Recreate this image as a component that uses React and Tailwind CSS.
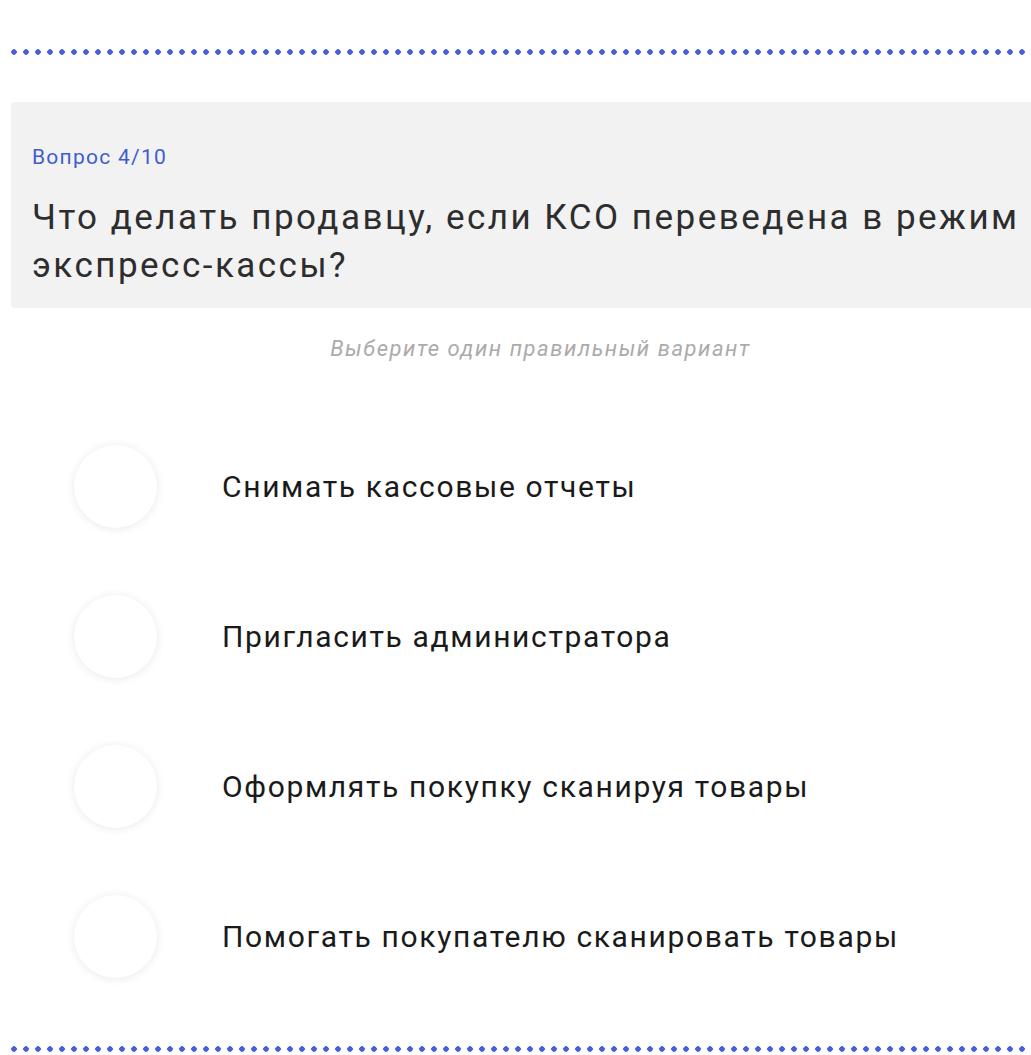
import { useState } from 'react';

const options = [
    'Снимать кассовые отчеты',
    'Пригласить администратора',
    'Оформлять покупку сканируя товары',
    'Помогать покупателю сканировать товары',
];

// Row of blue dots used as a divider above and below the quiz
const DotDivider = ({ className = '' }) => (
    <div
        className={`h-[6px] ml-[8px] bg-[radial-gradient(circle,#4a5fd4_2.5px,transparent_3px)] bg-size-[12px_6px] ${className}`}
    />
);

const Option = ({ label, selected, onSelect }) => (
    <button
        onClick={onSelect}
        className="flex items-center gap-[65px] text-left cursor-pointer"
    >
        <span className="w-[83px] h-[83px] rounded-full bg-white shadow-[0_1px_10px_rgba(0,0,0,0.09)] flex items-center justify-center shrink-0">
            {selected && <span className="w-[40px] h-[40px] rounded-full bg-[#4a5fd4]" />}
        </span>
        <span className="text-[30px] leading-[36px] tracking-[0.055em] text-[#1a1a1a]">{label}</span>
    </button>
);

const App = () => {
    const [selected, setSelected] = useState(null);

    return (
        <div className="min-h-[1055px] bg-white pt-[49px] font-['Roboto',sans-serif] overflow-hidden">
            <DotDivider />

            <div className="mt-[47px] ml-[11px] bg-[#f2f2f2] rounded-l-[4px] pl-[21px] pt-[41px] pb-[18px]">
                <p className="text-[21px] leading-[28px] tracking-[0.06em] text-[#3f5ccf]">Вопрос 4/10</p>
                <h1 className="mt-[23px] text-[35px] leading-[48px] tracking-[0.071em] text-[#2d2d2d]">
                    Что делать продавцу, если КСО переведена в режим экспресс-кассы?
                </h1>
            </div>

            <p className="mt-[27px] pl-[50px] text-center italic text-[22px] leading-[28px] tracking-[0.07em] text-[#ababab]">
                Выберите один правильный вариант
            </p>

            <div className="mt-[82px] ml-[74px] flex flex-col gap-[67px]">
                {options.map((label, i) => (
                    <Option
                        key={label}
                        label={label}
                        selected={selected === i}
                        onSelect={() => setSelected(i)}
                    />
                ))}
            </div>

            <DotDivider className="mt-[68px]" />
        </div>
    );
};

export default App;
